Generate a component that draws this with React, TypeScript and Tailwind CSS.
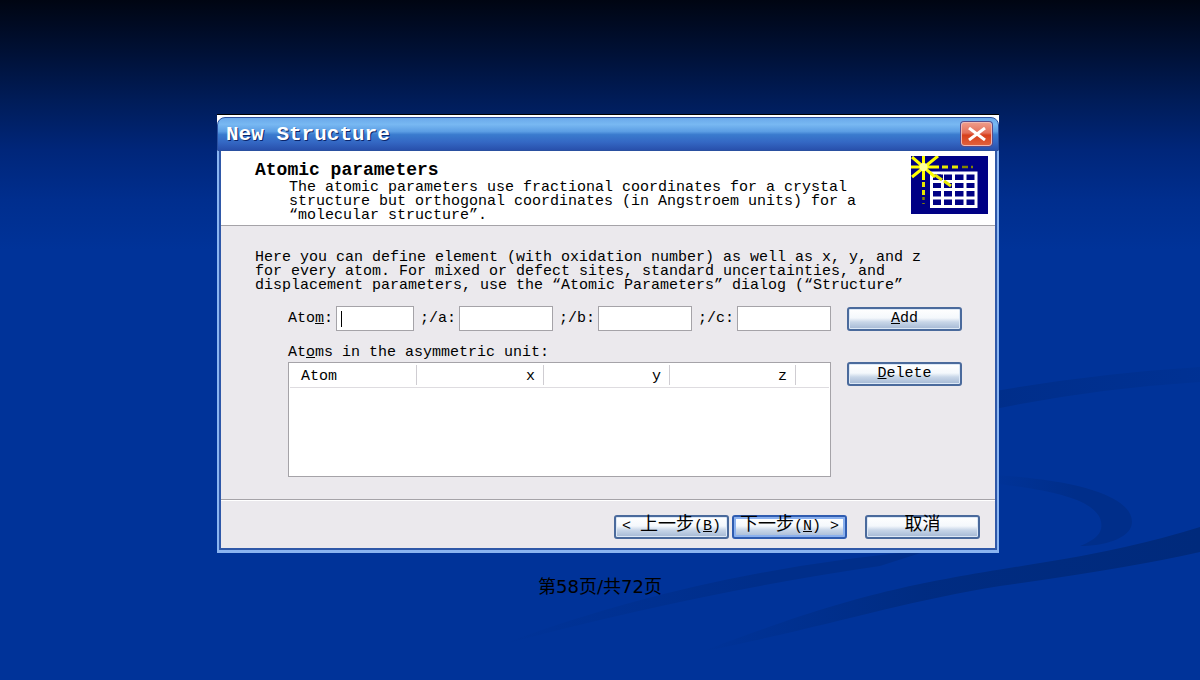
import React from 'react';
import clsx from 'clsx';

const COORDINATES = ['a', 'b', 'c'];

const COLUMNS = [
  { name: 'Atom', width: 'w-[127px]', align: 'justify-start pl-[11px]' },
  { name: 'x', width: 'w-[127px]', align: 'justify-end pr-2' },
  { name: 'y', width: 'w-[126px]', align: 'justify-end pr-2' },
  { name: 'z', width: 'w-[126px]', align: 'justify-end pr-2' },
];

const App = () => {
  return (
    <main className="relative isolate min-h-screen overflow-hidden bg-[#003399] bg-[linear-gradient(to_bottom,#000512_0px,#001034_50px,#001c58_100px,#00267a_150px,#002e8e_200px,#003399_250px)] font-['Liberation_Mono','Noto_Sans_CJK_SC',monospace] text-[15px] leading-[14px] text-black">
      <Swooshes />
      <div className="flex justify-center pt-[114px] pl-4">
        <Dialog />
      </div>
      <p className="mt-6 text-center font-['DejaVu_Sans','Noto_Sans_CJK_SC',sans-serif] text-lg leading-5">
        第58页/共72页
      </p>
    </main>
  );
};

export default App;

const Dialog = () => {
  return (
    <section
      aria-labelledby="dialog-title"
      className="w-full max-w-[782px] border-t border-black bg-white pt-[2px]"
    >
      <header className="flex h-[34px] items-center justify-between rounded-t-lg border border-[#2a50a0] bg-[linear-gradient(to_bottom,#6aa8ea_0%,#78b8f2_20%,#5c9ee4_42%,#3a7bce_52%,#3468c4_75%,#2850ac_100%)] pr-[6px] pl-2">
        <h1
          id="dialog-title"
          className="pt-[2px] text-[21px] leading-6 font-bold whitespace-nowrap text-white [text-shadow:1px_1px_0_#0a2468]"
        >
          New Structure
        </h1>
        <button
          type="button"
          aria-label="Close"
          className="flex h-6 w-[31px] items-center justify-center rounded-[3px] border border-[#f0b8b0] bg-[linear-gradient(to_bottom,#ee9a88_0%,#e4705a_45%,#d8401c_55%,#e0603c_100%)] shadow-[0_0_0_1px_#5a4a88]"
        >
          <svg viewBox="0 0 20 14" className="h-[14px] w-5" aria-hidden="true">
            <path
              d="M2 1 18 13M18 1 2 13"
              stroke="#fff"
              strokeWidth="3"
              fill="none"
            />
          </svg>
        </button>
      </header>
      <div className="border-x-2 border-b-[3px] border-[#8ab4f0]">
        <div className="border-x-2 border-b-2 border-[#2f58a8] bg-[#ebe9ed]">
          <Intro />
          <AtomForm />
          <Footer />
        </div>
      </div>
    </section>
  );
};

const Intro = () => {
  return (
    <div className="flex justify-between border-b border-[#a5a3a8] bg-white pt-1 pr-[7px] pl-[34px]">
      <div className="pt-[6px] pb-[2px]">
        <h2 className="mb-[2px] text-lg leading-[18px] font-bold">
          Atomic parameters
        </h2>
        <p className="pl-[34px] whitespace-nowrap">
          The atomic parameters use fractional coordinates for a crystal
          <br />
          structure but orthogonal coordinates (in Angstroem units) for a
          <br />
          “molecular structure”.
        </p>
      </div>
      <LatticeIcon />
    </div>
  );
};

const AtomForm = () => {
  return (
    <form className="border-b border-[#a5a3a8] pt-[25px] pr-[33px] pb-[22px] pl-[34px]">
      <p className="whitespace-nowrap">
        Here you can define element (with oxidation number) as well as x, y, and
        z<br />
        for every atom. For mixed or defect sites, standard uncertainties, and
        <br />
        displacement parameters, use the “Atomic Parameters” dialog (“Structure”
      </p>
      <div className="mt-[13px] flex items-center justify-between gap-4 pl-[33px]">
        <div className="flex min-w-0 flex-1 items-center">
          <label htmlFor="atom" className="w-12 shrink-0">
            Ato<u>m</u>:
          </label>
          <div className="flex h-[25px] w-[78px] shrink-0 items-center border border-[#a5a3a8] bg-white pl-1">
            <span className="h-4 w-px bg-black" />
            <input id="atom" className="w-full min-w-0 outline-none" />
          </div>
          {COORDINATES.map((axis) => (
            <React.Fragment key={axis}>
              <label
                htmlFor={`coord-${axis}`}
                className="w-[45px] shrink-0 pl-[6px]"
              >
                ;/{axis}:
              </label>
              <input
                id={`coord-${axis}`}
                className="h-[25px] w-0 min-w-0 flex-1 border border-[#a5a3a8] bg-white px-1 outline-none"
              />
            </React.Fragment>
          ))}
        </div>
        <WinButton>
          <u>A</u>dd
        </WinButton>
      </div>
      <div className="mt-[15px] pl-[33px]">
        <h3 id="atoms-label" className="mb-[2px]">
          At<u>o</u>ms in the asymmetric unit:
        </h3>
        <div className="flex items-start justify-between gap-4">
          <AtomTable />
          <WinButton>
            <u>D</u>elete
          </WinButton>
        </div>
      </div>
    </form>
  );
};

const AtomTable = () => {
  return (
    <div className="h-[115px] flex-1 border border-[#a5a3a8] bg-white px-px">
      <table
        aria-labelledby="atoms-label"
        className="w-full table-fixed border-collapse"
      >
        <thead>
          <tr className="border-b border-[#dedce0]">
            {COLUMNS.map((column) => (
              <th
                key={column.name}
                className={clsx('py-[2px] font-normal', column.width)}
              >
                <div
                  className={clsx(
                    'flex h-5 items-center border-r border-[#cfcdd2] pt-1',
                    column.align
                  )}
                >
                  {column.name}
                </div>
              </th>
            ))}
            <th />
          </tr>
        </thead>
        <tbody />
      </table>
    </div>
  );
};

const Footer = () => {
  return (
    <footer className="flex justify-end border-t border-white pt-[14px] pr-[15px] pb-[9px]">
      <WinButton>
        &lt; <Han>上一步</Han>(<u>B</u>)
      </WinButton>
      <WinButton className="ml-[3px]" primary>
        <Han>下一步</Han>(<u>N</u>) &gt;
      </WinButton>
      <WinButton className="ml-[18px]">
        <Han>取消</Han>
      </WinButton>
    </footer>
  );
};

const Han = ({ children }: { children: React.ReactNode }) => (
  <span className="text-lg leading-[14px]">{children}</span>
);

interface WinButtonPropsType {
  children: React.ReactNode;
  className?: string;
  primary?: boolean;
}

const WinButton = ({ children, className, primary }: WinButtonPropsType) => {
  return (
    <button
      type="button"
      className={clsx(
        'h-6 w-[115px] shrink-0 rounded-[3px] border-2 bg-[linear-gradient(to_bottom,#ffffff_0%,#f4f8fc_45%,#c8d6e8_65%,#a4b8d4_100%)] leading-5 whitespace-nowrap',
        primary
          ? 'border-[#2f5cb0] shadow-[inset_0_0_0_2px_#8ab0ee]'
          : 'border-[#4a6a9c] shadow-[inset_0_0_0_1px_#dce8f6]',
        className
      )}
    >
      {children}
    </button>
  );
};

const LatticeIcon = () => {
  return (
    <svg
      viewBox="0 0 77 58"
      className="mt-px h-[58px] w-[77px] shrink-0"
      aria-hidden="true"
    >
      <rect width="77" height="58" fill="#000084" />
      <path
        d="M20.500 17H65V50.500H20.500ZM31.500 17V50M42.500 17V50M54 17V50M20 25.500H65M20 33.500H65M20 42H65"
        fill="none"
        stroke="#fff"
        strokeWidth="3"
      />
      <path d="M24 18.500H32V24H28L24 22Z" fill="#000084" />
      <path
        d="M12.500 0V24M0 11H28M1 1 24 21M27 0 1 21"
        fill="none"
        stroke="#ffff00"
        strokeWidth="3"
      />
      <path
        d="M31 11H37M41 11H47M12.500 26V31M12.500 34V39M24 19 31 24M33 25 40 30"
        fill="none"
        stroke="#e8e800"
        strokeWidth="3"
      />
      <path
        d="M51 11H57M60 11H62M12.500 41V44M12.500 47V48"
        fill="none"
        stroke="#848400"
        strokeWidth="2.500"
      />
      <circle cx="12.500" cy="11" r="4" fill="#ffff9c" />
    </svg>
  );
};

const Swooshes = () => {
  return (
    <svg
      viewBox="0 0 1200 680"
      preserveAspectRatio="none"
      className="absolute inset-0 -z-10 h-full w-full"
      aria-hidden="true"
    >
      <defs>
        <linearGradient id="fade-left">
          <stop offset="0" stopColor="#002a7c" stopOpacity="0" />
          <stop offset="0.45" stopColor="#002a7c" stopOpacity="0.8" />
          <stop offset="1" stopColor="#002a7c" />
        </linearGradient>
        <linearGradient id="fade-soft">
          <stop offset="0" stopColor="#002e8a" stopOpacity="0" />
          <stop offset="0.6" stopColor="#002e8a" />
        </linearGradient>
        <linearGradient id="fade-right">
          <stop offset="0" stopColor="#002e8a" />
          <stop offset="1" stopColor="#002e8a" stopOpacity="0.35" />
        </linearGradient>
      </defs>
      <path
        d="M990 392Q1090 374 1200 367V382Q1090 389 990 410Z"
        fill="url(#fade-right)"
      />
      <path
        d="M990 475C1060 478 1132 492 1132 522C1132 536 1110 546 1080 546C1100 538 1104 530 1100 518C1090 498 1050 490 990 483Z"
        fill="url(#fade-soft)"
      />
      <path
        d="M500 645Q700 570 930 550L880 566Q700 592 500 645Z"
        fill="url(#fade-soft)"
      />
      <path
        d="M700 652C860 592 910 584 1040 563Q1130 549 1200 527V552Q1130 568 1000 586C900 602 830 626 700 652Z"
        fill="url(#fade-left)"
      />
    </svg>
  );
};
